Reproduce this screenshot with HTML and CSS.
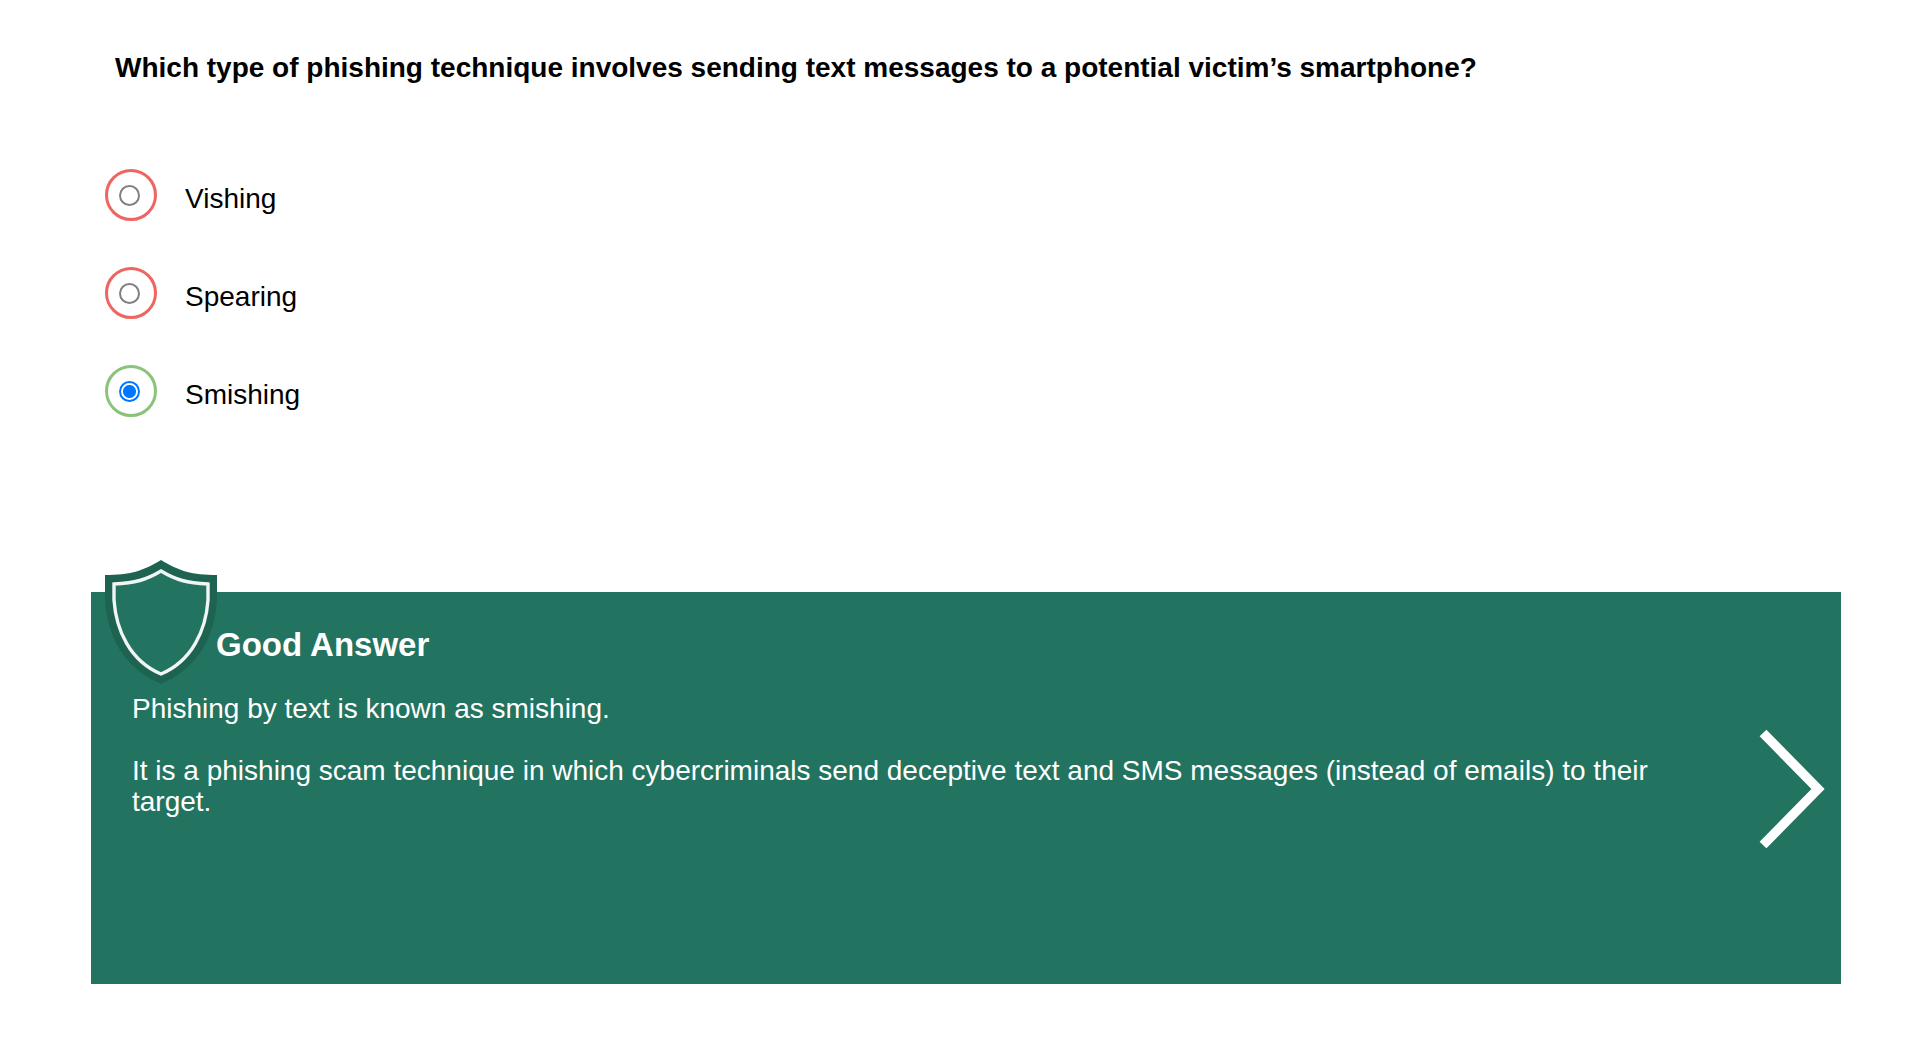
FILE: index.html
```html
<!DOCTYPE html>
<html lang="en">
<head>
<meta charset="utf-8">
<meta name="viewport" content="width=device-width, initial-scale=1">
<title>Phishing quiz</title>
<link rel="stylesheet" href="styles.css">
</head>
<body>
<main class="quiz">
  <h1 class="question" id="question">Which type of phishing technique involves sending text messages to a potential victim’s smartphone?</h1>

  <div class="options" role="radiogroup" aria-labelledby="question">
    <label class="option">
      <span class="ring ring-wrong"><input class="radio" type="radio" name="answer" value="vishing"></span>
      <span class="option-text">Vishing</span>
    </label>
    <label class="option">
      <span class="ring ring-wrong"><input class="radio" type="radio" name="answer" value="spearing"></span>
      <span class="option-text">Spearing</span>
    </label>
    <label class="option">
      <span class="ring ring-right"><input class="radio" type="radio" name="answer" value="smishing" checked></span>
      <span class="option-text">Smishing</span>
    </label>
  </div>

  <section class="feedback">
    <svg class="shield" viewBox="0 0 112 124" aria-hidden="true">
      <path fill="#1e6251" d="M56 0C74 11 87 15 112 15V38C110 77 93 108 56 124C19 108 2 77 0 38V15C25 15 38 11 56 0Z"/>
      <path fill="#22735f" stroke="#f1f6f4" stroke-width="3.4" d="M56 11C71 20 82 23 103 24V40C101 70 87 101 56 114C25 101 11 70 9 40V24C30 23 41 20 56 11Z"/>
    </svg>
    <div class="message">
      <h2 class="message-title">Good Answer</h2>
      <p class="message-text">Phishing by text is known as smishing.</p>
      <p class="message-text">It is a phishing scam technique in which cybercriminals send deceptive text and SMS messages (instead of emails) to their target.</p>
    </div>
    <button class="next" type="button" aria-label="Next">
      <svg class="chevron" viewBox="0 0 66 120" aria-hidden="true">
        <path fill="none" stroke="#fff" stroke-width="9.5" d="M4 5L59 61L4 117"/>
      </svg>
    </button>
  </section>
</main>
</body>
</html>
```
FILE: styles.css
```css
* {
  box-sizing: border-box;
}

body {
  margin: 0;
  background: #fff;
  color: #000;
  font-family: "Liberation Sans", Arial, sans-serif;
  font-size: 28px;
  line-height: 31px;
}

.quiz {
  padding: 52px 69px 60px 91px;
}

.question {
  margin: 0 0 86px;
  padding-left: 24px;
  font-size: 28px;
  font-weight: 700;
}

.options {
  display: flex;
  flex-direction: column;
  align-items: flex-start;
  gap: 46px;
  padding-left: 14px;
}

.option {
  display: flex;
  align-items: center;
  gap: 28px;
}

.ring {
  display: flex;
  align-items: center;
  justify-content: center;
  width: 52px;
  height: 52px;
  padding-right: 3px;
  border: 3px solid;
  border-radius: 50%;
}

.ring-wrong {
  border-color: #ee6663;
}

.ring-right {
  border-color: #8bc27c;
}

.radio {
  appearance: none;
  width: 21px;
  height: 21px;
  margin: 0;
  border: 2px solid #808080;
  border-radius: 50%;
  background: #fff;
}

.radio:checked {
  border-color: #0075ff;
  background: radial-gradient(circle, #0075ff 6px, #fff 7px);
}

.option-text {
  padding-top: 6px;
}

.feedback {
  position: relative;
  display: flex;
  align-items: center;
  justify-content: space-between;
  gap: 48px;
  min-height: 392px;
  margin-top: 175px;
  padding-right: 16px;
  background: #22735f;
  color: #fff;
}

.shield {
  position: absolute;
  top: -32px;
  left: 14px;
  width: 112px;
  height: 124px;
}

.message {
  flex: 1;
  align-self: flex-start;
  padding: 34px 0 31px 41px;
}

.message-title {
  margin: 0 0 29px;
  padding-left: 84px;
  font-size: 33px;
  font-weight: 700;
  line-height: 38px;
}

.message-text {
  margin: 0 0 31px;
}

.next {
  padding: 0;
  border: 0;
  background: none;
  cursor: pointer;
}

.chevron {
  display: block;
  width: 66px;
  height: 120px;
}
```
